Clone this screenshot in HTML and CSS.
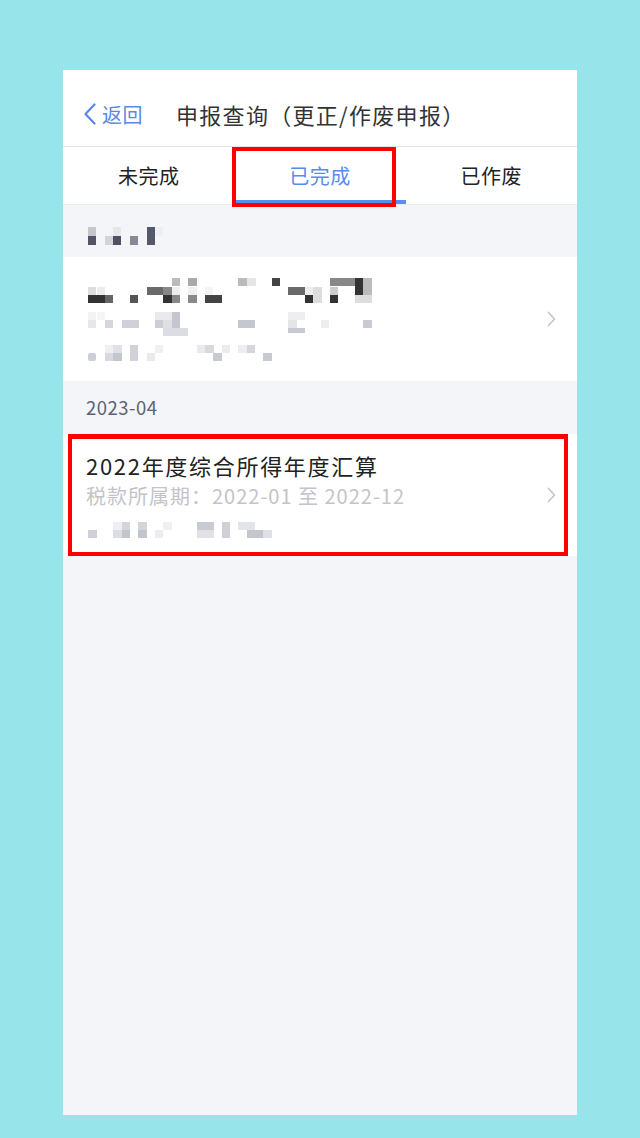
FILE: index.html
```html
<!DOCTYPE html>
<html lang="zh-CN">
<head>
<meta charset="utf-8">
<title>申报查询</title>
<link rel="stylesheet" href="styles.css">
</head>
<body>
<div class="phone">
  <header class="nav">
    <div class="back">
      <svg class="back-icon" width="14" height="22" viewBox="0 0 14 22"><path d="M11.5 1.5 L2.5 11 L11.5 20.5" fill="none" stroke="#5a88e6" stroke-width="2.2" stroke-linecap="round" stroke-linejoin="round"/></svg>
      <span>返回</span>
    </div>
    <div class="nav-title">申报查询（更正/作废申报）</div>
  </header>

  <nav class="tabs">
    <div class="tab">未完成</div>
    <div class="tab active">已完成</div>
    <div class="tab">已作废</div>
    <div class="mark mark-tab"></div>
  </nav>

  <div class="section-head">
    <svg width="120" height="52" viewBox="0 0 120 52">
      <rect x="25" y="22" width="8" height="9" fill="#c5c6cc"/>
      <rect x="25" y="31" width="8" height="9" fill="#505465"/>
      <rect x="42" y="31" width="8" height="9" fill="#d3d4da"/>
      <rect x="50" y="22" width="8" height="9" fill="#e6e7ea"/>
      <rect x="50" y="31" width="8" height="9" fill="#4d5163"/>
      <rect x="67" y="31" width="8" height="9" fill="#878a96"/>
      <rect x="84" y="22" width="8" height="18" fill="#545869"/>
      <rect x="92" y="22" width="8" height="9" fill="#eeeff2"/>
    </svg>
  </div>

  <div class="card card-1">
    <svg class="mosaic" width="320" height="124" viewBox="0 0 320 124">
      <rect x="25" y="30" width="8" height="8" fill="#dddddd"/>
      <rect x="34" y="30" width="8" height="8" fill="#ececec"/>
      <rect x="25" y="38" width="17" height="8" fill="#333333"/>
      <rect x="42" y="38" width="8" height="8" fill="#666666"/>
      <rect x="67" y="38" width="8" height="8" fill="#555555"/>
      <rect x="84" y="30" width="16" height="8" fill="#6a6a6a"/>
      <rect x="100" y="30" width="9" height="8" fill="#888888"/>
      <rect x="100" y="38" width="9" height="8" fill="#333333"/>
      <rect x="109" y="21" width="8" height="8" fill="#bbbbbb"/>
      <rect x="109" y="30" width="8" height="8" fill="#eeeeee"/>
      <rect x="109" y="38" width="8" height="8" fill="#888888"/>
      <rect x="125" y="21" width="9" height="8" fill="#aaaaaa"/>
      <rect x="125" y="30" width="9" height="8" fill="#f0f0f0"/>
      <rect x="125" y="38" width="9" height="8" fill="#888888"/>
      <rect x="142" y="30" width="8" height="8" fill="#f5f5f5"/>
      <rect x="142" y="38" width="17" height="8" fill="#444444"/>
      <rect x="175" y="21" width="9" height="8" fill="#bbbbbb"/>
      <rect x="184" y="21" width="9" height="8" fill="#e5e5e5"/>
      <rect x="209" y="21" width="8" height="8" fill="#444444"/>
      <rect x="225" y="30" width="17" height="8" fill="#6a6a6a"/>
      <rect x="242" y="30" width="8" height="8" fill="#eeeeee"/>
      <rect x="242" y="38" width="8" height="8" fill="#333333"/>
      <rect x="250" y="30" width="9" height="16" fill="#dddddd"/>
      <rect x="267" y="21" width="8" height="8" fill="#888888"/>
      <rect x="267" y="30" width="8" height="8" fill="#cccccc"/>
      <rect x="267" y="38" width="8" height="8" fill="#333333"/>
      <rect x="275" y="21" width="17" height="8" fill="#888888"/>
      <rect x="292" y="21" width="8" height="17" fill="#333333"/>
      <rect x="300" y="21" width="9" height="17" fill="#bbbbbb"/>
      <rect x="292" y="38" width="17" height="8" fill="#dddddd"/>

      <rect x="25" y="55" width="8" height="8" fill="#f3f3f5"/>
      <rect x="34" y="55" width="8" height="8" fill="#f5f5f6"/>
      <rect x="25" y="63" width="8" height="8" fill="#e6e7eb"/>
      <rect x="42" y="63" width="8" height="8" fill="#d6d7dd"/>
      <rect x="59" y="63" width="17" height="8" fill="#cfd0d8"/>
      <rect x="92" y="55" width="17" height="8" fill="#eaeaec"/>
      <rect x="92" y="63" width="8" height="8" fill="#ccced6"/>
      <rect x="100" y="63" width="9" height="8" fill="#e0e0e4"/>
      <rect x="109" y="55" width="8" height="16" fill="#c5c7d0"/>
      <rect x="100" y="71" width="25" height="8" fill="#dcdde2"/>
      <rect x="175" y="63" width="17" height="8" fill="#c5c7d0"/>
      <rect x="225" y="55" width="17" height="8" fill="#eeeef0"/>
      <rect x="225" y="63" width="9" height="8" fill="#e5e5e8"/>
      <rect x="225" y="71" width="17" height="5" fill="#c8cad2"/>
      <rect x="258" y="63" width="8" height="8" fill="#eeeeee"/>
      <rect x="300" y="63" width="9" height="8" fill="#c9cbd3"/>

      <rect x="25" y="96" width="8" height="8" rx="2" fill="#cdcfd6"/>
      <rect x="42" y="88" width="8" height="8" fill="#f0f0f2"/>
      <rect x="42" y="96" width="8" height="8" fill="#d8d9de"/>
      <rect x="50" y="88" width="9" height="8" fill="#e0e1e5"/>
      <rect x="50" y="96" width="9" height="8" fill="#c5c7cf"/>
      <rect x="67" y="88" width="8" height="16" fill="#d0d2d8"/>
      <rect x="84" y="96" width="8" height="8" fill="#eaeaee"/>
      <rect x="92" y="88" width="8" height="8" fill="#f0f0f2"/>
      <rect x="134" y="88" width="9" height="8" fill="#eaeaee"/>
      <rect x="142" y="88" width="9" height="8" fill="#d8d9de"/>
      <rect x="150" y="96" width="9" height="8" fill="#c8cad2"/>
      <rect x="159" y="88" width="8" height="8" fill="#ececf0"/>
      <rect x="175" y="88" width="9" height="8" fill="#eeeef0"/>
      <rect x="184" y="88" width="8" height="8" fill="#d6d7dd"/>
      <rect x="200" y="96" width="9" height="8" fill="#c8cad2"/>
    </svg>
    <svg class="chev" width="9" height="16" viewBox="0 0 9 16"><path d="M1.5 1.5 L7.5 8 L1.5 14.5" fill="none" stroke="#c6c7cc" stroke-width="1.8" stroke-linecap="round" stroke-linejoin="round"/></svg>
  </div>

  <div class="section-head">
    <span class="month">2023-04</span>
  </div>

  <div class="card card-2">
    <div class="card-body">
      <div class="item-title">2022年度综合所得年度汇算</div>
      <div class="item-sub">税款所属期：2022-01 至 2022-12</div>
      <svg class="mosaic-line" width="240" height="28" viewBox="0 0 240 28">
        <rect x="2" y="18" width="9" height="8" fill="#cfd0d6"/>
        <rect x="27" y="10" width="9" height="8" fill="#efeff2"/>
        <rect x="27" y="18" width="9" height="8" fill="#dcdde2"/>
        <rect x="36" y="10" width="8" height="8" fill="#d4d5db"/>
        <rect x="36" y="18" width="8" height="8" fill="#c3c5cd"/>
        <rect x="52" y="10" width="9" height="8" fill="#d4d5db"/>
        <rect x="52" y="18" width="9" height="8" fill="#c3c5cd"/>
        <rect x="69" y="18" width="8" height="8" fill="#ededf0"/>
        <rect x="77" y="10" width="9" height="8" fill="#f0f0f2"/>
        <rect x="111" y="10" width="17" height="8" fill="#c9cbd2"/>
        <rect x="111" y="18" width="17" height="8" fill="#e1e2e6"/>
        <rect x="136" y="10" width="8" height="16" fill="#cfd0d6"/>
        <rect x="152" y="10" width="17" height="8" fill="#e3e4e8"/>
        <rect x="161" y="18" width="17" height="8" fill="#c4c6ce"/>
        <rect x="177" y="18" width="9" height="8" fill="#dfe0e4"/>
      </svg>
    </div>
    <svg class="chev" width="9" height="16" viewBox="0 0 9 16"><path d="M1.5 1.5 L7.5 8 L1.5 14.5" fill="none" stroke="#c6c7cc" stroke-width="1.8" stroke-linecap="round" stroke-linejoin="round"/></svg>
    <div class="mark mark-card"></div>
  </div>
</div>
</body>
</html>
```

FILE: styles.css
```css
* { box-sizing: border-box; }

html, body {
  margin: 0;
  padding: 0;
}

body {
  background: #97e4eb;
  padding: 70px 63px 23px;
  font-family: "Noto Sans CJK SC", "Noto Sans", sans-serif;
}

.phone {
  width: 514px;
  height: 1045px;
  background: #f4f5f9;
  overflow: hidden;
}

.nav {
  height: 77px;
  background: #ffffff;
  border-bottom: 1px solid #e4e5e9;
  display: flex;
  align-items: center;
  padding: 12px 0 0 20px;
}

.back {
  display: flex;
  align-items: center;
  gap: 5px;
  color: #5a88e6;
  font-size: 20px;
  letter-spacing: 0.5px;
}

.back-icon { display: block; }

.nav-title {
  margin-left: 33px;
  font-size: 22px;
  letter-spacing: 1.3px;
  color: #333333;
}

.tabs {
  position: relative;
  height: 58px;
  background: #ffffff;
  border-bottom: 1px solid #ebecef;
  display: grid;
  grid-template-columns: 1fr 1fr 1fr;
}

.tab {
  position: relative;
  display: flex;
  align-items: center;
  justify-content: center;
  font-size: 20px;
  letter-spacing: 0.5px;
  color: #222222;
}

.tab.active {
  color: #5a8af0;
}

.tab.active::after {
  content: "";
  position: absolute;
  left: 0;
  right: 0;
  bottom: 0;
  height: 4px;
  background: #5b8cef;
}

.mark {
  position: absolute;
  border: 4px solid #ff0000;
  pointer-events: none;
}

.mark-tab {
  left: 169px;
  top: 0;
  width: 164px;
  height: 60px;
}

.section-head {
  height: 52px;
  display: flex;
  align-items: center;
  padding-left: 23px;
}

.section-head svg {
  margin-left: -23px;
  display: block;
}

.month {
  font-size: 18.5px;
  color: #5f6270;
  letter-spacing: 0.5px;
}

.card {
  position: relative;
  background: #ffffff;
  display: flex;
  align-items: center;
  justify-content: space-between;
  padding-right: 21px;
}

.card-1 {
  height: 124px;
}

.mosaic { display: block; }

.card-2 {
  height: 122px;
  padding-left: 23px;
  margin-top: 1px;
}

.card-body {
  display: flex;
  flex-direction: column;
}

.item-title {
  font-size: 22px;
  line-height: 30px;
  letter-spacing: 1.7px;
  color: #222222;
}

.item-sub {
  font-size: 20px;
  line-height: 32px;
  letter-spacing: 1px;
  color: #c3c4c9;
}

.mosaic-line { display: block; }

.chev { display: block; }

.mark-card {
  left: 5px;
  right: 9px;
  top: 0;
  bottom: 0;
  border-width: 5px 4px 4px 4px;
}
```
